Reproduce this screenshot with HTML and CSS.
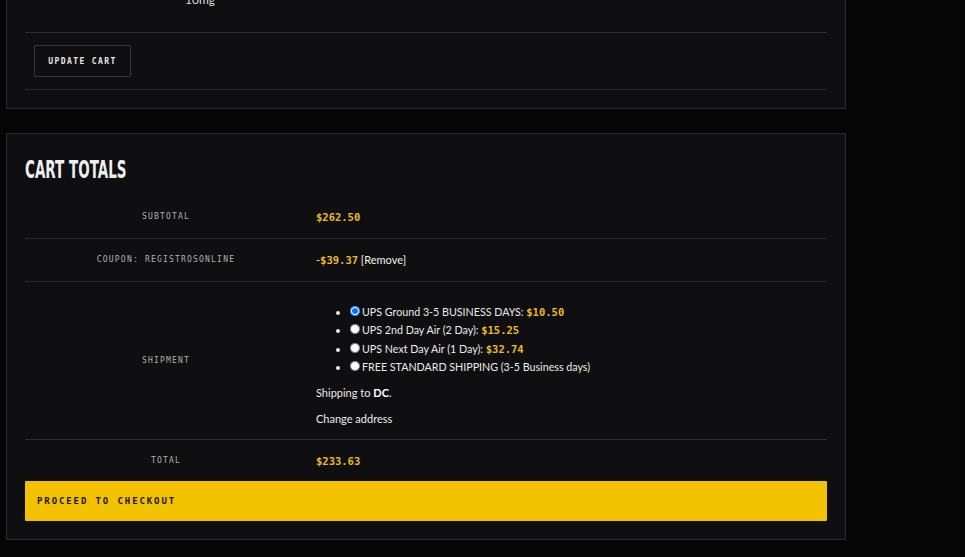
FILE: index.html
```html
<!DOCTYPE html>
<html lang="en">
<head>
    <meta charset="UTF-8">
    <title>Cart</title>
    <link rel="stylesheet" href="styles.css">
</head>
<body>
<div class="page">
    <div class="panel cart-items">
        <div class="item-row">
            <span class="item-meta">10mg</span>
        </div>
        <div class="actions">
            <button class="btn-outline">Update cart</button>
        </div>
    </div>

    <div class="panel totals">
        <h2 class="totals-title">Cart totals</h2>
        <table class="totals-table">
            <tr class="row-subtotal">
                <th>Subtotal</th>
                <td><span class="amount">$262.50</span></td>
            </tr>
            <tr class="row-coupon">
                <th>Coupon: registrosonline</th>
                <td>-<span class="amount">$39.37</span> <a class="remove" href="#">[Remove]</a></td>
            </tr>
            <tr class="row-shipping">
                <th>Shipment</th>
                <td>
                    <ul class="ship-methods">
                        <li><label><input type="radio" name="ship" checked>UPS Ground 3-5 BUSINESS DAYS: <span class="amount">$10.50</span></label></li>
                        <li><label><input type="radio" name="ship">UPS 2nd Day Air (2 Day): <span class="amount">$15.25</span></label></li>
                        <li><label><input type="radio" name="ship">UPS Next Day Air (1 Day): <span class="amount">$32.74</span></label></li>
                        <li><label><input type="radio" name="ship">FREE STANDARD SHIPPING (3-5 Business days)</label></li>
                    </ul>
                    <p class="ship-dest">Shipping to <strong>DC</strong>.</p>
                    <p class="ship-change"><a href="#">Change address</a></p>
                </td>
            </tr>
            <tr class="row-total">
                <th>Total</th>
                <td><span class="amount">$233.63</span></td>
            </tr>
        </table>
        <button class="btn-checkout">Proceed to checkout</button>
    </div>
</div>
</body>
</html>
```

FILE: styles.css
```css
body { margin: 0; background: #050505; color: #e8e8e8; font-family: Lato, "Noto Sans", sans-serif; overflow: hidden; }
.page { padding-left: 6px; width: 840px; }
.panel { background: #0f0f11; border: 1px solid #2c2c2e; padding: 0 18px; }

.cart-items { margin-top: -30px; padding-bottom: 18px; }
.item-row { height: 62px; border-bottom: 1px solid #2c2c2e; box-sizing: border-box; padding: 17px 0 0 160px; }
.item-meta { font-size: 12px; color: #ddd; }
.actions { height: 57px; border-bottom: 1px solid #2c2c2e; padding: 12px 0 0 9px; box-sizing: border-box; }
.btn-outline { background: transparent; border: 1px solid #38383a; color: #e6e6e6; height: 32px; width: 97px; padding: 0; font-family: "DejaVu Sans Mono", monospace; font-weight: bold; font-size: 8px; letter-spacing: 1.4px; text-transform: uppercase; border-radius: 1px; }

.totals { margin-top: 24px; padding-bottom: 18px; }
.totals-title { margin: 0; padding: 24px 0 0; height: 61px; box-sizing: border-box; font-family: "Liberation Sans Narrow", "DejaVu Sans Condensed", sans-serif; font-weight: bold; font-size: 25px; line-height: 24px; color: #eeeeee; text-transform: uppercase; transform: scaleX(0.6); transform-origin: left; }

.totals-table { width: 100%; border-collapse: collapse; }
.totals-table tr { border-bottom: 1px solid #2c2c2e; }
.totals-table tr.row-total { border-bottom: none; }
.totals-table th { width: 282px; font-family: "DejaVu Sans Mono", monospace; font-weight: normal; font-size: 8px; letter-spacing: 1.2px; color: #b0b0b0; text-transform: uppercase; text-align: center; padding: 0; }
.totals-table td { padding: 0 0 0 9px; font-size: 11px; color: #eaeaea; }
.row-subtotal, .row-coupon { height: 43px; }
.row-total { height: 42px; }
.amount { font-family: "DejaVu Sans Mono", monospace; font-weight: bold; font-size: 10.5px; color: #eab925; }
.remove { color: #f0f0f0; text-decoration: none; }

.row-shipping td { padding-top: 21px; padding-bottom: 11px; }
.ship-methods { margin: 0; padding-left: 34px; font-size: 10.7px; }
.ship-methods li { line-height: 17.6px; }
.ship-methods input { width: 10px; height: 10px; margin: 0 2px 0 0; vertical-align: 0; }
.ship-dest { margin: 8px 0 0; line-height: 18px; }
.ship-dest strong { font-weight: bold; color: #fff; }
.ship-change { margin: 8px 0 0; line-height: 18px; }
.ship-change a { color: #eaeaea; text-decoration: none; }

.btn-checkout { display: block; width: 100%; height: 40px; border: none; background: #f2c200; color: #1a1600; text-align: left; padding: 0 12px; font-family: "DejaVu Sans Mono", monospace; font-weight: bold; font-size: 9px; letter-spacing: 1.9px; text-transform: uppercase; border-radius: 1px; }
```
